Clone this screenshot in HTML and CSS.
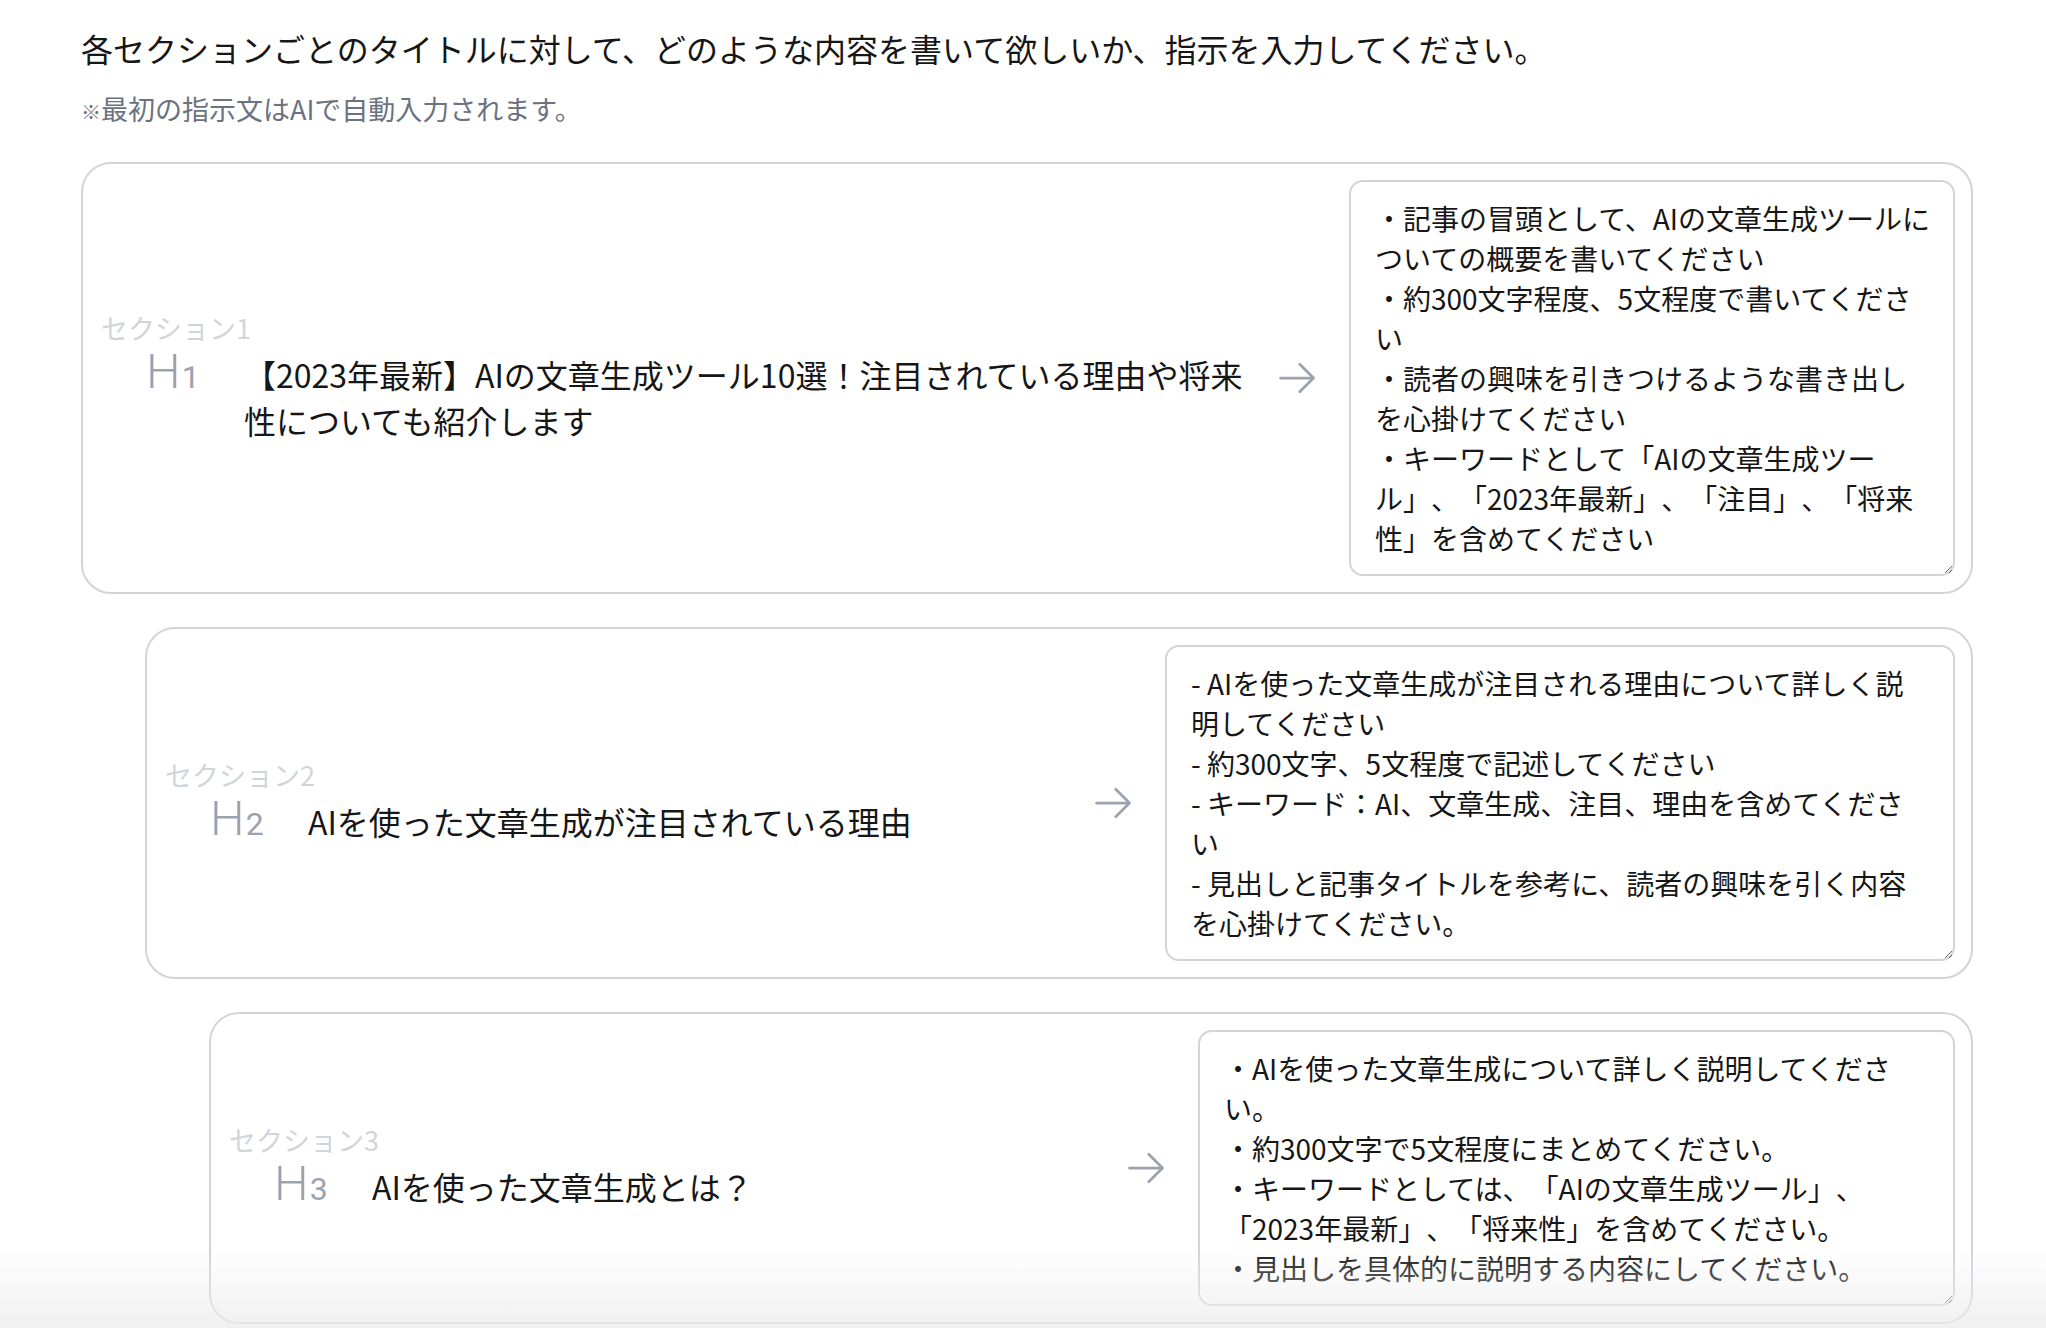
FILE: index.html
```html
<!DOCTYPE html>
<html lang="ja">
<head>
<meta charset="utf-8">
<title>セクション指示</title>
<link rel="stylesheet" href="styles.css">
</head>
<body>
<main class="page">
  <header class="intro">
    <p class="intro-title">各セクションごとのタイトルに対して、どのような内容を書いて欲しいか、指示を入力してください。</p>
    <p class="intro-note"><span class="kome">※</span>最初の指示文はAIで自動入力されます。</p>
  </header>

  <div class="sections">
    <section class="card level-1">
      <div class="heading">
        <div class="label">セクション1</div>
        <div class="heading-row">
          <span class="hicon">H<small>1</small></span>
          <span class="title">【2023年最新】AIの文章生成ツール10選！注目されている理由や将来性についても紹介します</span>
        </div>
      </div>
      <svg class="arrow" viewBox="0 0 24 24" fill="none" stroke="currentColor" stroke-width="1.5"><path stroke-linecap="round" stroke-linejoin="round" d="M13.5 4.5 21 12m0 0-7.5 7.5M21 12H3"/></svg>
      <textarea class="prompt prompt-1" rows="9">・記事の冒頭として、AIの文章生成ツールについての概要を書いてください
・約300文字程度、5文程度で書いてください
・読者の興味を引きつけるような書き出しを心掛けてください
・キーワードとして「AIの文章生成ツール」、「2023年最新」、「注目」、「将来性」を含めてください</textarea>
    </section>

    <section class="card level-2">
      <div class="heading">
        <div class="label">セクション2</div>
        <div class="heading-row">
          <span class="hicon">H<small>2</small></span>
          <span class="title">AIを使った文章生成が注目されている理由</span>
        </div>
      </div>
      <svg class="arrow" viewBox="0 0 24 24" fill="none" stroke="currentColor" stroke-width="1.5"><path stroke-linecap="round" stroke-linejoin="round" d="M13.5 4.5 21 12m0 0-7.5 7.5M21 12H3"/></svg>
      <textarea class="prompt prompt-2" rows="7">- AIを使った文章生成が注目される理由について詳しく説明してください
- 約300文字、5文程度で記述してください
- キーワード：AI、文章生成、注目、理由を含めてください
- 見出しと記事タイトルを参考に、読者の興味を引く内容を心掛けてください。</textarea>
    </section>

    <section class="card level-3">
      <div class="heading">
        <div class="label">セクション3</div>
        <div class="heading-row">
          <span class="hicon">H<small>3</small></span>
          <span class="title">AIを使った文章生成とは？</span>
        </div>
      </div>
      <svg class="arrow" viewBox="0 0 24 24" fill="none" stroke="currentColor" stroke-width="1.5"><path stroke-linecap="round" stroke-linejoin="round" d="M13.5 4.5 21 12m0 0-7.5 7.5M21 12H3"/></svg>
      <textarea class="prompt prompt-3" rows="6">・AIを使った文章生成について詳しく説明してください。
・約300文字で5文程度にまとめてください。
・キーワードとしては、「AIの文章生成ツール」、「2023年最新」、「将来性」を含めてください。
・見出しを具体的に説明する内容にしてください。</textarea>
    </section>
  </div>
</main>
<div class="bottom-fade"></div>
</body>
</html>
```

FILE: styles.css
```css
* { box-sizing: border-box; }

html, body {
  margin: 0;
  padding: 0;
  background: #ffffff;
}

body {
  font-family: "Noto Sans CJK JP", "Noto Sans", sans-serif;
  color: #161616;
  overflow: hidden;
  text-spacing-trim: space-all;
}

.page {
  padding: 24px 73px 0 81px;
}

.intro p {
  margin: 0;
}

.intro-title {
  font-size: 32px;
  line-height: 48px;
  color: #161616;
}

.intro-note {
  margin-top: 19px !important;
  font-size: 27px;
  line-height: 36px;
  height: 36px;
  color: #6b7280;
}

.kome {
  font-size: 20px;
  line-height: 0;
}

.sections {
  margin-top: 35px;
  display: flex;
  flex-direction: column;
  gap: 33px;
}

.card {
  display: flex;
  align-items: center;
  border: 2px solid #d1d5db;
  border-radius: 30px;
  padding: 16px;
  background: #fff;
}

.level-2 { margin-left: 64px; }
.level-3 { margin-left: 128px; }

.heading {
  flex: 1;
  min-width: 0;
  padding-left: 2px;
  margin-top: -3px;
}

.label {
  font-size: 27px;
  line-height: 36px;
  color: #d1d5db;
}

.heading-row {
  display: flex;
  align-items: baseline;
  margin-top: 3px;
}

.hicon {
  flex: none;
  width: 143px;
  padding-left: 45px;
  font-family: "Roboto", "Liberation Sans", sans-serif;
  font-weight: 300;
  font-size: 49px;
  line-height: 46px;
  color: #9ca3af;
  white-space: nowrap;
}

.hicon small {
  font-family: "Roboto", "Liberation Sans", sans-serif;
  font-weight: 400;
  font-size: 32px;
  margin-left: 1px;
}

.title {
  flex: 1;
  min-width: 0;
  font-size: 32px;
  line-height: 46px;
  color: #161616;
}

.arrow {
  flex: none;
  width: 44px;
  height: 44px;
  margin: 0 30px 0 30px;
  color: #9ca3af;
}

.prompt {
  flex: none;
  font-family: "Noto Sans CJK JP", "Noto Sans", sans-serif;
  font-size: 28px;
  line-height: 40px;
  color: #161616;
  border: 2px solid #d1d5db;
  border-radius: 14px;
  padding: 16px 22px 16px 24px;
  box-sizing: content-box;
  overflow: hidden;
  background: #fff;
  outline: none;
  margin: 0;
  text-spacing-trim: space-all;
}

.prompt-1 { width: 556px; }
.prompt-2 { width: 740px; }
.prompt-3 { width: 707px; }

.bottom-fade {
  position: fixed;
  left: 0;
  right: 0;
  bottom: 0;
  height: 80px;
  background: linear-gradient(to bottom, rgba(235, 235, 235, 0), rgba(235, 235, 235, 0.75));
  pointer-events: none;
}
```
